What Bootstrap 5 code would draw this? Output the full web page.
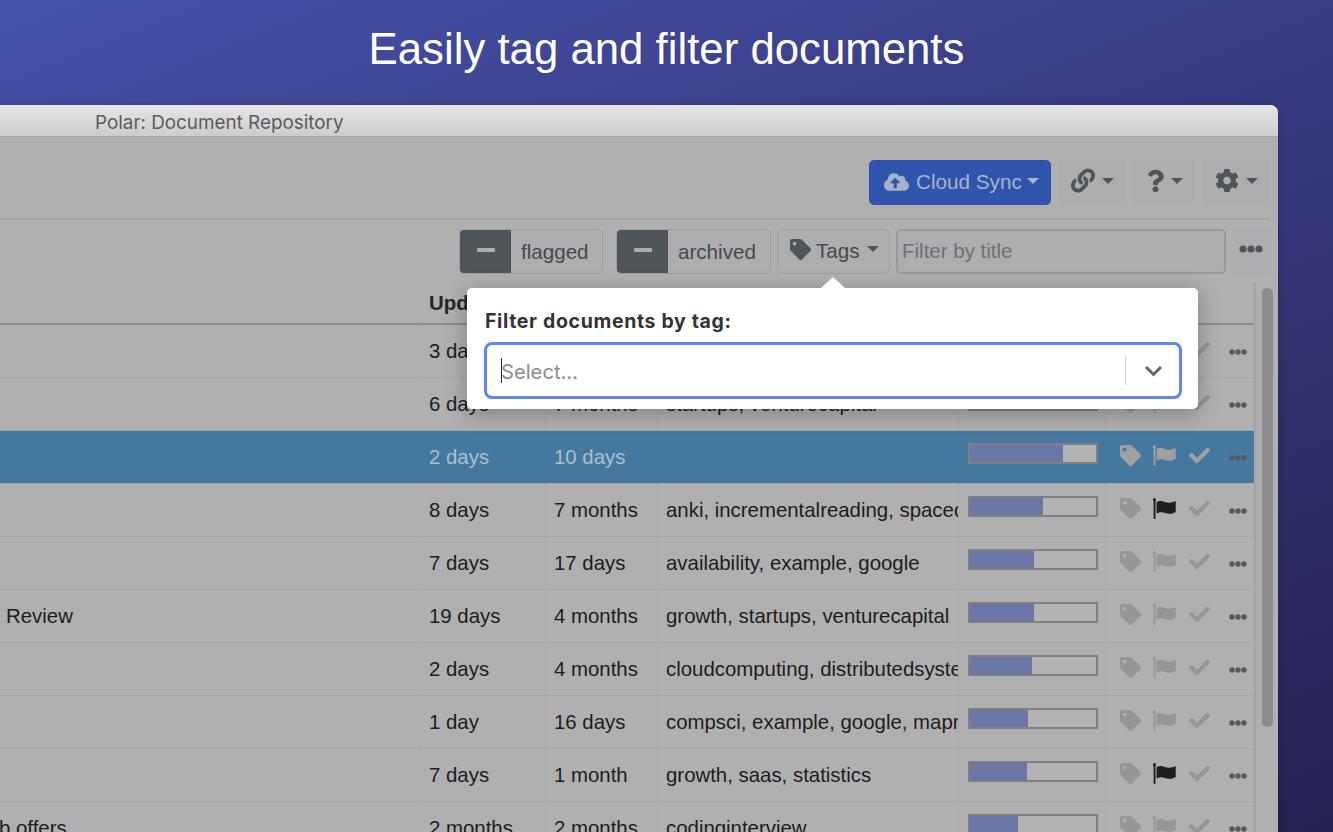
<!DOCTYPE html>
<html lang="en">
<head>
<meta charset="utf-8">
<title>Polar: Document Repository</title>
<link href="https://cdn.jsdelivr.net/npm/bootstrap@5.3.0/dist/css/bootstrap.min.css" rel="stylesheet">
<style>
html,body{height:100%;overflow:hidden}
body{background:linear-gradient(158deg,#4552a9 0%,#38397f 45%,#242150 100%);font-family:"Liberation Sans",Arial,sans-serif;display:flex;flex-direction:column}
.hero-title{height:105px;line-height:98px;font-size:43.75px;color:#fff;text-align:center;margin:0;font-weight:400;flex:none}
.app-win{flex:1 1 auto;min-height:0;margin-right:55px;border-radius:0 8px 0 0;overflow:hidden;background:#b0b0b0;display:flex;flex-direction:column;box-shadow:0 0 8px rgba(0,0,0,.2)}
.win-bar{height:32px;flex:none;padding-left:95px;line-height:35px;font-family:Inter,"Noto Sans",sans-serif;font-size:18.85px;color:#5b5b5b;background:linear-gradient(#e6e6e6,#cdcdcd);border-bottom:1px solid #a6a6a6}
.tool-one{height:83px;flex:none;margin-right:8px;padding-top:23px;border-bottom:2px solid #a3a3a3;gap:7px}
.tool-two{height:63px;flex:none;padding:8px 7px 0 0;gap:6px;align-items:flex-start}
.tb-btn{height:45px;padding:0 12px;font-size:20.7px;line-height:1;border:0;border-radius:5px;background:#adaeb0;color:#50555a;display:flex;align-items:center}
.tb-btn.dropdown-toggle::after{margin-left:7px;vertical-align:0;border-top-color:#50555a;flex:none;position:relative;top:-2px}
.cloud-btn{background:#2e54ab;color:#a8b3cb;width:182px;padding:0 0 0 15px}
.cloud-btn:hover{background:#2e54ab;color:#a8b3cb}
.cloud-btn.dropdown-toggle::after{border-top-color:#adb7cc;margin-left:5px;top:-2px}
.cloud-btn svg{width:25px;height:20px;margin-right:7px;margin-top:-2px;fill:#a8b3cb}
.link-btn{width:68px;padding-left:13px}.help-btn{width:63px;padding-left:15px;margin-left:-1px}.gear-btn{width:68px;padding-left:13px}
.link-btn svg{width:25px;height:25px;fill:#50555a;margin-top:-4px}
.help-btn svg{width:19px;height:26px;fill:#50555a;margin-top:-4px}
.gear-btn svg{width:25px;height:25px;fill:#50555a;margin-top:-4px}
.toggle-pair{height:45px;margin-top:1px;border:1px solid #9f9f9f;border-radius:5px;overflow:hidden;background:#adaeb0}
.toggle-dark{width:51px;background:#50555a;display:flex;align-items:center;justify-content:center;padding-bottom:3px}
.toggle-dark span{display:block;width:18px;height:4px;border-radius:1px;background:#adaeb0}
.toggle-word{font-size:20.6px;color:#45494d;padding:0 10px;line-height:43px}
.flag-pair{width:144px}.arch-pair{width:155px;margin-left:7px}
.tags-btn{width:113px;margin-top:1px;padding:0 0 1px 12px;border:1px solid #9f9f9f;color:#45494d}
.tags-btn svg{width:21px;height:21px;fill:#50555a;margin:-3px 5px 0 0}
.title-input.form-control{width:330px;height:45px;margin-top:1px;padding:0 4px 1px;border:2px solid #9a9a9a;border-radius:5px;background:#adaeb0;font-size:20.5px;font-family:inherit;box-shadow:none}
.title-input::placeholder{color:#6d7073;opacity:1}
.more-btn{width:39px;height:48px;padding:0 2px 0 0;justify-content:center;margin-top:-1px}
.more-btn svg{width:24px;height:8px;fill:#50555a;margin-top:-5px}
.tbl-wrap{flex:1 1 auto;min-height:0;position:relative;display:flex}
.tbl-main{flex:1 1 auto;min-width:0;overflow:hidden}
.docs-tbl{table-layout:fixed;width:1254px;margin:0;background:transparent;--bs-table-bg:transparent;border-collapse:separate;border-spacing:0}
.docs-tbl th,.docs-tbl td{height:53px;padding:0 0 0 8px;font-size:20.4px;color:#1c1c1c;white-space:nowrap;overflow:hidden;text-overflow:clip;vertical-align:middle;border-bottom:1px solid #a6a6a6;border-right:1px solid #acacac;background:transparent;box-shadow:none;font-weight:400}
.docs-tbl th{height:42px;font-weight:700;border-bottom:2px solid #8c8c8c;color:#262626;padding-top:0}
.docs-tbl th.col-upd,.docs-tbl td.col-upd{padding-left:9px}
.docs-tbl td.title-cell{padding-left:6px}
.docs-tbl td.cut-cell{text-indent:-1px;padding-left:0}
.docs-tbl td.bar-cell{padding:0 8px 8px 9px}
.docs-tbl td.ico-cell{padding:0 0 0 14px;border-right:0}
.docs-tbl tr.pick td{background:#44789f;color:#aebfce;border-bottom-color:#a6a6a6;border-right-color:#44789f}
.read-bar.progress{height:21px;width:130px;border:2px solid #808080;border-radius:0;background:#b3b3b3}
.read-bar .progress-bar{background:#6a76a6}
.ico-row{align-items:center;height:100%;padding-bottom:3px}
.ico-row svg{flex:none;fill:#969696}
.i-tag{width:21px;height:21px}
.i-flag{width:23px;height:21px;margin-left:12px}
.i-check{width:21px;height:21px;margin-left:13px}
.i-more{width:18px;height:6px;margin-left:19px;margin-top:4px}
.ico-row .i-more{fill:#585858}
.ico-row .i-flag.on{fill:#1e1e1e}
.pick .ico-row svg{fill:#a0a0a0}
.pick .ico-row .i-more{fill:#585b5e}
.scroll-col{width:24px;flex:none;border-left:2px solid #a4a4a4;padding:5px 5px 0 6px}
.scroll-thumb{height:439px;border-radius:6px;background:#8c8c8c}
.tag-pop{position:absolute;left:467px;top:5px;width:731px;height:121px;background:#fff;border-radius:5px;padding:21px 16px 0 17px;box-shadow:0 4px 22px rgba(0,0,0,.28)}
.tag-pop::before{content:"";position:absolute;left:354px;top:-11px;border:12px solid transparent;border-top:0;border-bottom:11px solid #fff}
.pop-label{font-family:Inter,"Noto Sans",sans-serif;font-weight:700;font-size:19.5px;letter-spacing:.65px;line-height:24px;color:#333;margin-bottom:9px;padding-left:1px}
.pop-select{height:57px;border:3px solid #5b87f9;border-radius:8px;padding:0 16px 0 14px;align-items:center}
.pop-caret{display:inline-block;width:1px;height:25px;background:#333}
.pop-ph{font-family:Inter,"Noto Sans",sans-serif;font-size:20.2px;color:#8c8c8c;flex:1 1 auto;line-height:24px;padding-top:3px;margin-left:-1px}
.pop-sep{width:1px;height:28px;background:#ccc;margin-right:18px}
.pop-chev{width:19px;height:12px;fill:none;stroke:#666;stroke-width:3}
</style>
</head>
<body>
<svg width="0" height="0" class="position-absolute">
<defs>
<symbol id="s-tag" viewBox="0 0 512 512"><path d="M0 252.118V48C0 21.49 21.49 0 48 0h204.118a48 48 0 0 1 33.941 14.059l211.882 211.882c18.745 18.745 18.745 49.137 0 67.882L293.823 497.941c-18.745 18.745-49.137 18.745-67.882 0L14.059 286.059A48 48 0 0 1 0 252.118zM112 64c-26.51 0-48 21.49-48 48s21.49 48 48 48 48-21.49 48-48-21.49-48-48-48z"/></symbol>
<symbol id="s-flag" viewBox="0 0 23 21"><circle cx="1.500" cy="1.500" r="1.500"/><rect x=".6" y="1" width="1.900" height="20" rx=".8"/><path d="M3.600 4C7 2.200 9 3 12 4c3 1 6.300 1 10.700-1v11c-4.400 2.500-7.700 2-10.700 1-3-1-5-1-8.400.5z"/></symbol>
<symbol id="s-check" viewBox="0 0 512 512"><path d="M173.898 439.404l-166.4-166.4c-9.997-9.997-9.997-26.206 0-36.204l36.203-36.204c9.997-9.998 26.206-9.998 36.204 0L192 312.69 432.095 72.596c9.997-9.997 26.206-9.997 36.204 0l36.203 36.204c9.997 9.997 9.997 26.206 0 36.204l-294.4 294.401c-9.998 9.997-26.207 9.997-36.204-.001z"/></symbol>
<symbol id="s-more" viewBox="0 0 24 8"><circle cx="4" cy="4" r="3.6"/><circle cx="12" cy="4" r="3.6"/><circle cx="20" cy="4" r="3.6"/></symbol>
</defs>
</svg>

<h1 class="hero-title">Easily tag and filter documents</h1>

<div class="app-win">
  <div class="win-bar">Polar: Document Repository</div>

  <div class="tool-one d-flex justify-content-end">
    <button class="btn tb-btn cloud-btn dropdown-toggle" type="button">
      <svg viewBox="0 0 640 512"><path d="M537.6 226.6c4.1-10.7 6.4-22.4 6.4-34.6 0-53-43-96-96-96-19.7 0-38.1 6-53.3 16.2C367 64.2 315.3 32 256 32c-88.4 0-160 71.6-160 160 0 2.7.1 5.4.2 8.1C40.2 219.8 0 273.2 0 336c0 79.5 64.5 144 144 144h368c70.7 0 128-57.3 128-128 0-61.9-44-113.6-102.4-125.4zM393.4 288H328v112c0 8.8-7.2 16-16 16h-48c-8.8 0-16-7.2-16-16V288h-65.4c-14.3 0-21.4-17.2-11.3-27.3l105.4-105.4c6.2-6.2 16.4-6.2 22.6 0l105.4 105.4c10.1 10.1 2.9 27.3-11.3 27.3z"/></svg>Cloud Sync
    </button>
    <button class="btn tb-btn link-btn dropdown-toggle" type="button" aria-label="Links">
      <svg viewBox="0 0 512 512"><path d="M326.612 185.391c59.747 59.809 58.927 155.698.36 214.59-.11.12-.24.25-.36.37l-67.2 67.2c-59.27 59.27-155.699 59.262-214.96 0-59.27-59.26-59.27-155.7 0-214.96l37.106-37.106c9.84-9.84 26.786-3.3 27.294 10.606.648 17.722 3.826 35.527 9.69 52.721 1.986 5.822.567 12.262-3.783 16.612l-13.087 13.087c-28.026 28.026-28.905 73.66-1.155 101.96 28.024 28.579 74.086 28.749 102.325.51l67.2-67.19c28.191-28.191 28.073-73.757 0-101.83-3.701-3.694-7.429-6.564-10.341-8.569a16.037 16.037 0 0 1-6.947-12.606c-.396-10.567 3.348-21.456 11.698-29.806l21.054-21.055c5.521-5.521 14.182-6.199 20.584-1.731a152.482 152.482 0 0 1 20.522 17.197zM467.547 44.449c-59.261-59.262-155.69-59.27-214.96 0l-67.2 67.2c-.12.12-.25.25-.36.37-58.566 58.892-59.387 154.781.36 214.59a152.454 152.454 0 0 0 20.521 17.196c6.402 4.468 15.064 3.789 20.584-1.731l21.054-21.055c8.35-8.35 12.094-19.239 11.698-29.806a16.037 16.037 0 0 0-6.947-12.606c-2.912-2.005-6.64-4.875-10.341-8.569-28.073-28.073-28.191-73.639 0-101.83l67.2-67.19c28.239-28.239 74.3-28.069 102.325.51 27.75 28.3 26.872 73.934-1.155 101.96l-13.087 13.087c-4.35 4.35-5.769 10.79-3.783 16.612 5.864 17.194 9.042 34.999 9.69 52.721.509 13.906 17.454 20.446 27.294 10.606l37.106-37.106c59.271-59.259 59.271-155.699.001-214.959z"/></svg>
    </button>
    <button class="btn tb-btn help-btn dropdown-toggle" type="button" aria-label="Help">
      <svg viewBox="0 0 384 512"><path d="M202.021 0C122.202 0 70.503 32.703 29.914 91.026c-7.363 10.58-5.093 25.086 5.178 32.874l43.138 32.709c10.373 7.865 25.132 6.026 33.253-4.148 25.049-31.381 43.63-49.449 82.757-49.449 30.764 0 68.816 19.799 68.816 49.631 0 22.552-18.617 34.134-48.993 51.164-35.423 19.86-82.299 44.576-82.299 106.405V320c0 13.255 10.745 24 24 24h72.471c13.255 0 24-10.745 24-24v-5.773c0-42.86 125.268-44.645 125.268-160.627C377.504 66.256 286.902 0 202.021 0zM192 373.459c-38.196 0-69.271 31.075-69.271 69.271 0 38.195 31.075 69.27 69.271 69.27s69.271-31.075 69.271-69.271-31.075-69.27-69.271-69.27z"/></svg>
    </button>
    <button class="btn tb-btn gear-btn dropdown-toggle" type="button" aria-label="Settings">
      <svg viewBox="0 0 512 512"><path d="M487.4 315.7l-42.6-24.6c4.3-23.2 4.3-47 0-70.2l42.6-24.6c4.9-2.8 7.1-8.6 5.5-14-11.1-35.6-30-67.8-54.7-94.6-3.8-4.1-10-5.1-14.8-2.3L380.8 110c-17.9-15.4-38.5-27.3-60.8-35.1V25.8c0-5.6-3.9-10.5-9.4-11.7-36.7-8.2-74.3-7.8-109.2 0-5.5 1.2-9.4 6.1-9.4 11.7V75c-22.2 7.9-42.8 19.8-60.8 35.1L88.7 85.5c-4.9-2.8-11-1.9-14.8 2.3-24.7 26.7-43.6 58.9-54.7 94.6-1.7 5.4.6 11.2 5.5 14L67.3 221c-4.3 23.2-4.3 47 0 70.2l-42.6 24.6c-4.9 2.8-7.1 8.6-5.5 14 11.1 35.6 30 67.8 54.7 94.6 3.8 4.1 10 5.1 14.8 2.3l42.6-24.6c17.9 15.4 38.5 27.3 60.8 35.1v49.2c0 5.6 3.9 10.5 9.4 11.7 36.7 8.2 74.3 7.8 109.2 0 5.5-1.2 9.4-6.1 9.4-11.7v-49.2c22.2-7.9 42.8-19.8 60.8-35.1l42.6 24.6c4.9 2.8 11 1.9 14.8-2.3 24.7-26.7 43.6-58.9 54.7-94.6 1.5-5.5-.7-11.3-5.6-14.1zM256 336c-44.1 0-80-35.9-80-80s35.9-80 80-80 80 35.9 80 80-35.9 80-80 80z"/></svg>
    </button>
  </div>

  <div class="tool-two d-flex justify-content-end">
    <div class="toggle-pair flag-pair d-flex"><div class="toggle-dark"><span></span></div><div class="toggle-word">flagged</div></div>
    <div class="toggle-pair arch-pair d-flex"><div class="toggle-dark"><span></span></div><div class="toggle-word">archived</div></div>
    <button class="btn tb-btn tags-btn dropdown-toggle" type="button"><svg><use href="#s-tag"/></svg>Tags</button>
    <input class="form-control title-input" type="text" placeholder="Filter by title">
    <button class="btn tb-btn more-btn" type="button" aria-label="More"><svg><use href="#s-more"/></svg></button>
  </div>

  <div class="tbl-wrap">
    <div class="tbl-main">
      <table class="table docs-tbl">
        <colgroup><col style="width:420px"><col style="width:126px"><col style="width:112px"><col style="width:301px"><col style="width:147px"><col style="width:148px"></colgroup>
        <thead><tr><th></th><th class="col-upd">Updated</th><th></th><th></th><th></th><th></th></tr></thead>
        <tbody id="rows"></tbody>
      </table>
    </div>
    <div class="scroll-col"><div class="scroll-thumb"></div></div>

    <div class="tag-pop">
      <div class="pop-label">Filter documents by tag:</div>
      <div class="pop-select d-flex">
        <span class="pop-caret"></span>
        <span class="pop-ph">Select...</span>
        <span class="pop-sep"></span>
        <svg class="pop-chev" viewBox="0 0 19 12"><polyline points="2,2 9.5,9.5 17,2"/></svg>
      </div>
    </div>
  </div>
</div>

<script>
var data=[
 ["","3 days","","",60,0,0],
 ["","6 days","7 months","startups, venturecapital",60,0,0],
 ["","2 days","10 days","",74,0,1],
 ["","8 days","7 months","anki, incrementalreading, spacedrepetition",58,1,0],
 ["","7 days","17 days","availability, example, google",51,0,0],
 ["Review","19 days","4 months","growth, startups, venturecapital",51,0,0],
 ["","2 days","4 months","cloudcomputing, distributedsystems",49,0,0],
 ["","1 day","16 days","compsci, example, google, mapreduce",46,0,0],
 ["","7 days","1 month","growth, saas, statistics",45,1,0],
 ["job offers","2 months","2 months","codinginterview",38,0,0]
];
var html="";
data.forEach(function(r){
  var t=r[0]==="job offers"?'<td class="cut-cell">b offers</td>':'<td class="title-cell">'+r[0]+'</td>';
  html+='<tr'+(r[6]?' class="pick"':'')+'>'+t+
  '<td class="col-upd">'+r[1]+'</td><td>'+r[2]+'</td><td>'+r[3]+'</td>'+
  '<td class="bar-cell"><div class="progress read-bar"><div class="progress-bar" style="width:'+r[4]+'%"></div></div></td>'+
  '<td class="ico-cell"><div class="d-flex ico-row"><svg class="i-tag"><use href="#s-tag"/></svg><svg class="i-flag'+(r[5]?' on':'')+'"><use href="#s-flag"/></svg><svg class="i-check"><use href="#s-check"/></svg><svg class="i-more"><use href="#s-more"/></svg></div></td></tr>';
});
document.getElementById("rows").innerHTML=html;
</script>
<script src="https://cdn.jsdelivr.net/npm/bootstrap@5.3.0/dist/js/bootstrap.bundle.min.js"></script>
</body>
</html>
